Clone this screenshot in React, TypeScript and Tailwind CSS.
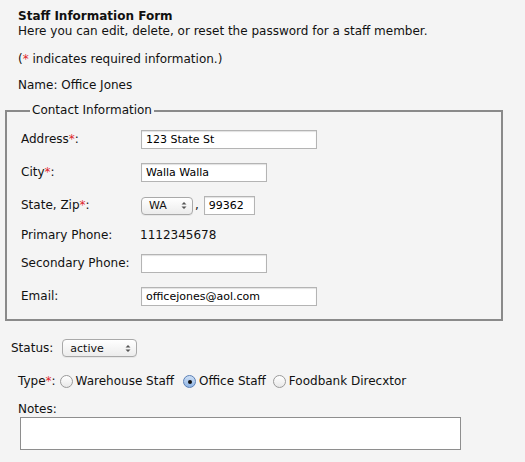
import React from "react";

const font = { fontFamily: '"DejaVu Sans", Verdana, sans-serif' };

function Star() {
  return <span className="text-[#e0262c]">*</span>;
}

function Radio({ checked }: { checked?: boolean }) {
  return (
    <span
      className={
        "inline-flex h-[13px] w-[13px] items-center justify-center rounded-full border " +
        (checked
          ? "border-[#5a7fb5] bg-gradient-to-b from-[#cfe0f5] to-[#8fb4e3]"
          : "border-[#9a9a9a] bg-gradient-to-b from-[#ffffff] to-[#e8e8e8]")
      }
    >
      {checked && <span className="h-[4px] w-[4px] rounded-full bg-[#111]" />}
    </span>
  );
}

function Select({ value, w }: { value: string; w: string }) {
  return (
    <span
      className={
        "inline-flex h-[18px] items-center justify-between rounded-[4px] border border-[#a9a9a9] bg-gradient-to-b from-[#ffffff] to-[#ececec] pl-[7px] pr-[5px] text-[11px] shadow-[0_1px_0_rgba(0,0,0,0.05)] " +
        w
      }
    >
      <span>{value}</span>
      <svg width="6" height="9" viewBox="0 0 6 9">
        <path d="M0.5 3.5 L3 1 L5.5 3.5Z M0.5 5.5 L3 8 L5.5 5.5Z" fill="#555" />
      </svg>
    </span>
  );
}

function Input({ value, w }: { value?: string; w: string }) {
  return (
    <span
      className={
        "inline-flex h-[19px] items-center border border-[#b4b4b4] bg-white px-[4px] text-[11px] text-black shadow-[inset_0_1px_1px_rgba(0,0,0,0.12)] " +
        w
      }
    >
      {value}
    </span>
  );
}

function Row({ label, children, h }: { label: React.ReactNode; children: React.ReactNode; h: string }) {
  return (
    <div className={"flex items-center " + h}>
      <div className="w-[120px] shrink-0">{label}</div>
      <div className="flex items-center">{children}</div>
    </div>
  );
}

export default function App() {
  return (
    <div
      className="min-h-[462px] w-[525px] bg-[#f4f4f4] text-[12px] leading-[15px] text-[#111]"
      style={font}
    >
      <div className="pl-[18px] pt-[9px]">
        <div className="font-bold">Staff Information Form</div>
        <div>Here you can edit, delete, or reset the password for a staff member.</div>
        <div className="mt-[13px]">
          (<Star /> indicates required information.)
        </div>
        <div className="mt-[11px]">Name: Office Jones</div>
      </div>
      <fieldset className="mx-[5px] mt-[10px] w-[498px] border-2 border-[#8a8a8a] px-[14px] pb-[4px] pt-0">
        <legend className="ml-[9px] px-[2px]">Contact Information</legend>
        <div className="pt-[5px]">
          <Row h="h-[33px]" label={<>Address<Star />:</>}>
            <Input value="123 State St" w="w-[176px]" />
          </Row>
          <Row h="h-[33px]" label={<>City<Star />:</>}>
            <Input value="Walla Walla" w="w-[126px]" />
          </Row>
          <Row h="h-[33px]" label={<>State, Zip<Star />:</>}>
            <Select value="WA" w="w-[52px]" />
            <span className="ml-[2px] mr-[5px]">,</span>
            <Input value="99362" w="w-[51px]" />
          </Row>
          <Row h="h-[27px]" label="Primary Phone:">
            <span className="-ml-[1px]">1112345678</span>
          </Row>
          <Row h="h-[29px]" label="Secondary Phone:">
            <Input w="w-[126px]" />
          </Row>
          <Row h="h-[37px]" label="Email:">
            <Input value="officejones@aol.com" w="w-[176px]" />
          </Row>
        </div>
      </fieldset>
      <div className="mt-[18px] flex items-center pl-[11px]">
        <span>Status:</span>
        <span className="ml-[9px]">
          <Select value="active" w="w-[75px]" />
        </span>
      </div>
      <div className="mt-[17px] flex items-center pl-[18px]">
        <span>
          Type<Star />:
        </span>
        <span className="ml-[4px] flex items-center">
          <Radio />
          <span className="ml-[3px]">Warehouse Staff</span>
        </span>
        <span className="ml-[9px] flex items-center">
          <Radio checked />
          <span className="ml-[3px]">Office Staff</span>
        </span>
        <span className="ml-[7px] flex items-center">
          <Radio />
          <span className="ml-[3px]">Foodbank Direcxtor</span>
        </span>
      </div>
      <div className="mt-[13px] pl-[18px]">Notes:</div>
      <div className="ml-[20px] mt-0 h-[33px] w-[441px] border border-[#8e8e8e] bg-white" />
    </div>
  );
}
